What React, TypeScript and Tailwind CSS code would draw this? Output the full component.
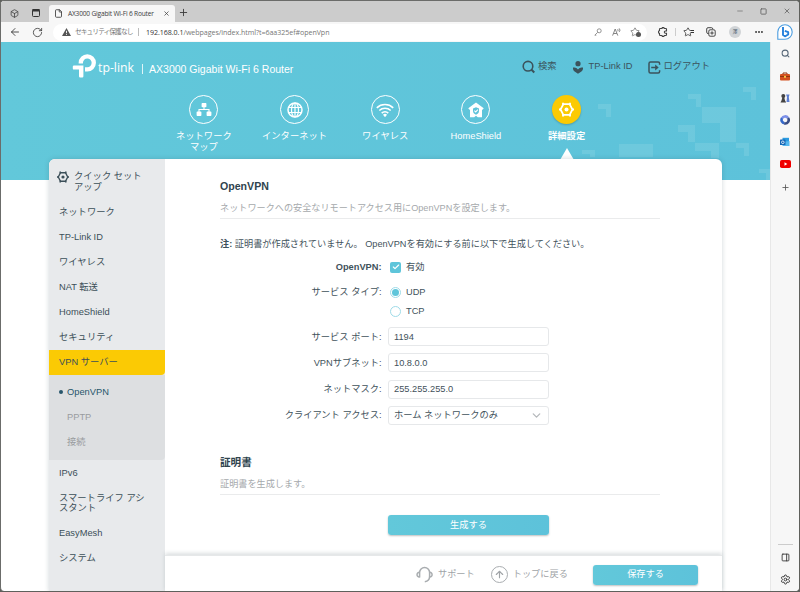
import type { ReactNode } from "react";
import clsx from "clsx";
import {
  ArrowLeft,
  ArrowUp,
  Box,
  Check,
  ChevronDown,
  File,
  Minus,
  MoreHorizontal,
  PanelRight,
  Plus,
  RotateCw,
  Search,
  Settings,
  Square,
  Star,
  X,
} from "lucide-react";

const MENU_TOP = ["ネットワーク", "TP-Link ID", "ワイヤレス", "NAT 転送", "HomeShield", "セキュリティ"];

function HexGear({ className }: { className?: string }) {
  return (
    <svg viewBox="0 0 24 24" className={className} fill="none" stroke="currentColor">
      <path d="M7 3.500h10L21.500 12 17 20.500H7L2.500 12z" strokeWidth="2.800" strokeLinejoin="round" />
      <path d="M6.500 1v4M17.500 1v4M0 12h3M21 12h3M6.500 19v4M17.500 19v4" strokeWidth="3.200" />
      <circle cx="12" cy="12" r="3.200" fill="currentColor" stroke="none" />
    </svg>
  );
}

function TpLogo() {
  return (
    <svg viewBox="0 0 24 24" className="h-6 w-6 shrink-0" fill="#fff">
      <path d="M8.800 9.600V8.800A6.500 6.500 0 1 1 15.300 15.300H13" fill="none" stroke="#fff" strokeWidth="4.300" />
      <path d="M2 11.400H11.400V22.200a1.200 1.200 0 0 1-1.200 1.200H8.200A1.200 1.200 0 0 1 7 22.200V15.600H2A1.200 1.200 0 0 1 .8 14.400V12.600A1.200 1.200 0 0 1 2 11.400z" />
    </svg>
  );
}

function NetworkMapIcon() {
  return (
    <svg viewBox="0 0 16 16" className="size-4" fill="#fff">
      <rect x="5.600" y="1" width="4.800" height="4.200" rx=".8" />
      <rect x=".6" y="9.600" width="4.800" height="4.400" rx=".8" />
      <rect x="10.600" y="9.600" width="4.800" height="4.400" rx=".8" />
      <path d="M8 5v2.500M3 10V7.500h10V10" fill="none" stroke="#fff" strokeWidth="1.100" />
    </svg>
  );
}

function GlobeIcon() {
  return (
    <svg viewBox="0 0 16 16" className="size-4" fill="none" stroke="#fff" strokeWidth="1.200">
      <circle cx="8" cy="8" r="7" strokeWidth="1.500" />
      <ellipse cx="8" cy="8" rx="3.500" ry="7" />
      <path d="M8 1v14M1.500 5.500h13M1.500 10.500h13" />
    </svg>
  );
}

function WifiIcon() {
  return (
    <svg viewBox="0 0 18 16" className="h-4 w-[18px]" fill="none" stroke="#fff" strokeWidth="1.600">
      <path d="M.8 5.800a12 12 0 0 1 16.400 0M3.300 8.500a8.300 8.300 0 0 1 11.400 0M5.700 11.200a4.800 4.800 0 0 1 6.600 0" />
      <path d="M7 12.800a2.800 2.800 0 0 1 4 0L9 15.200z" fill="#fff" stroke="none" />
    </svg>
  );
}

function ShieldHomeIcon() {
  return (
    <svg viewBox="0 0 16 16" className="size-4" fill="none">
      <path d="M8 .5 15.700 6.300 14.700 7.800 14 7.400V15.200H9.800L8 13.700 6.200 15.200H2V7.400l-.7.4L.3 6.300z" fill="#fff" />
      <path d="M8 5.300 11 6.400v2.500c0 1.700-1.200 3-3 3.800-1.800-.8-3-2.100-3-3.800V6.400z" fill="#5fc3da" />
      <path d="m6.400 8.700 1.300 1.300 2.200-2.300" stroke="#fff" strokeWidth="1.100" />
    </svg>
  );
}

function CloudUserIcon() {
  return (
    <svg viewBox="0 0 12 14" className="h-3.5 w-3" fill="#3b535c">
      <circle cx="6" cy="3.700" r="2.600" />
      <path d="M1 7.600c2.200-.5 3.800.2 5 1.900 1.200-1.700 2.800-2.400 5-1.900.2 1.800-.4 3-1.600 3.900L6 13.700l-3.400-2.200C1.400 10.600.8 9.400 1 7.600z" />
    </svg>
  );
}

function LogoutIcon() {
  return (
    <svg viewBox="0 0 13 13" className="size-[13px]" fill="none" stroke="#3b535c" strokeWidth="1.500">
      <path d="M11.600 3.800V2.500A1.500 1.500 0 0 0 10.100 1H2.500A1.500 1.500 0 0 0 1 2.500v8A1.500 1.500 0 0 0 2.500 12h7.600a1.500 1.500 0 0 0 1.500-1.500V9.200" />
      <path d="M3.200 6.500H9" />
      <path d="M7.200 3.500 10.700 6.500 7.200 9.500z" fill="#3b535c" stroke="none" />
    </svg>
  );
}

function HeadsetIcon() {
  return (
    <svg viewBox="0 0 17 17" className="size-[17px]" fill="none" stroke="#a9adb0" strokeWidth="1.500">
      <path d="M3.600 11.500V6.500a5 5 0 0 1 10 0v3.800c0 3.300-1.600 5.100-4.800 5.500" />
      <path d="M3.600 6.300C.2 6 .2 11.300 3.600 11M13.600 6.300c3.300-.3 3.300 5 0 4.700" />
    </svg>
  );
}

/* Pale pixel blocks behind the right part of the header */
function PixelPattern() {
  return (
    <svg viewBox="0 0 190 138" className="absolute top-0 right-0 h-[138px] w-[190px]" fill="#fff" fillOpacity=".1">
      <path d="M18 62h13v13h-5v-8h-8zM108 52h13v13h-5v-8h-8zM163 45h13v13h-5v-8h-8z" />
      <path d="M122 65h34v35h-16V81h-18zM98 83h17v17h-7v-10H98zM115 101h24v15h-8v-7h-16z" />
      <path d="M156 101h13v13h-5v-8h-8zM39 102h34v13H39zM2 108h13v7h-5v-3H2zM179 127h11v11h-4v-7h-7z" />
    </svg>
  );
}

function BrowserChrome() {
  return (
    <div className="font-['Open_Sans','Noto_Sans_CJK_JP',sans-serif] text-[#3c3c3c]">
      <div className="flex h-[21px] items-end bg-[#cccccc]">
        <div className="flex h-[18px] w-[48px] items-center gap-[13px] pl-[9px]">
          <Box className="size-[9px]" strokeWidth={2} />
          <svg viewBox="0 0 8 8" className="size-2">
            <rect x=".5" y=".5" width="7" height="7" rx="1" fill="none" stroke="#333" />
            <path d="M.5 0h7v2.500h-7z" fill="#333" />
          </svg>
        </div>
        <div className="flex h-[17px] w-[126px] items-center rounded-t-[3px] bg-[#f7f7f7] pl-[5px]">
          <File className="size-[9px] shrink-0" strokeWidth={2.300} />
          <span className="ml-[5px] w-[91px] text-[6.600px] tracking-[-0.190px] whitespace-nowrap">AX3000 Gigabit Wi-Fi 6 Router</span>
          <X className="ml-[4px] size-[7px] shrink-0" strokeWidth={2.500} />
        </div>
        <Plus className="mb-[4px] ml-[3px] size-[11px]" strokeWidth={2} />
        <div className="mb-[7px] ml-auto flex items-center gap-[16px] pr-[8px] text-[#666]">
          <Minus className="size-[8px]" />
          <Square className="size-[7px]" strokeWidth={3} />
          <X className="size-[8px]" strokeWidth={2.500} />
        </div>
      </div>
      <div className="flex h-5 items-center bg-[#f7f7f7]">
        <ArrowLeft className="ml-[8px] size-[12px]" strokeWidth={1.800} />
        <RotateCw className="ml-[11px] size-[11px]" strokeWidth={1.800} />
        <div className="ml-[10px] flex h-[17px] w-[594px] items-center rounded-full bg-white pl-[9px] text-[7.100px] whitespace-nowrap text-[#777]">
          <svg viewBox="0 0 9 8" className="h-2 w-[9px] shrink-0">
            <path d="M4.500 0 9 8H0z" fill="#555" />
            <path d="M4.500 2.800v2.400M4.500 6v.9" stroke="#fff" strokeWidth=".9" />
          </svg>
          <span className="ml-[4px] w-[58px] text-[6.700px] tracking-[-0.900px]">セキュリティ保護なし</span>
          <span className="ml-[5px] h-[8px] w-px bg-[#bbb]" />
          <span className="ml-[7px] tracking-[-0.060px]">
            <span className="text-[#333]">192.168.0.1</span>/webpages/index.html?t=6aa325ef#openVpn
          </span>
          <div className="mr-[7px] ml-auto flex items-center gap-[9px]">
            <svg viewBox="0 0 8 8" className="mr-px size-2" fill="none" stroke="#888" strokeWidth=".9">
              <circle cx="5.200" cy="2.800" r="2" />
              <path d="M3.700 4.300.8 7.200h1.500" />
            </svg>
            <svg viewBox="0 0 9 8" className="h-2 w-[9px]" fill="none" stroke="#777" strokeWidth=".9">
              <path d="M.6 7.600 3.200 1l2.600 6.600M1.500 5.500h3.400M5.700 1.200q.9.900 0 2M7.200.4q1.600 1.700 0 3.500" />
            </svg>
            <span className="relative">
              <Star className="size-[10px]" strokeWidth={1.900} />
              <span className="absolute right-[-1px] bottom-0 size-[5px] rounded-full bg-[#555]" />
            </span>
          </div>
        </div>
        <svg viewBox="0 0 10 10" className="ml-[11px] size-[10px]" fill="none" stroke="#444" strokeWidth="1.100">
          <path d="M8.500 4V2.200a.7.700 0 0 0-.7-.7H6.200a1.100 1.100 0 0 0-2.200 0H2.200a.7.700 0 0 0-.7.700v1.600a1.200 1.200 0 0 0 0 2.400v1.600c0 .4.300.7.700.7H4a1.100 1.100 0 0 0 2.200 0h1.600c.4 0 .7-.3.700-.7V6.200H7.400a1.100 1.100 0 0 1 0-2.200z" />
        </svg>
        <span className="ml-[7px] h-[8px] w-px bg-[#ccc]" />
        <span className="relative ml-[7px]">
          <Star className="size-[10px]" strokeWidth={2} />
          <span className="absolute top-[3px] right-[-1px] h-[3px] w-[3px] border-y border-[#333] bg-[#f7f7f7]" />
        </span>
        <svg viewBox="0 0 10 10" className="ml-[13px] size-[10px]" fill="none" stroke="#333" strokeWidth=".9">
          <path d="M2.500 6.500H2a1.300 1.300 0 0 1-1.300-1.300V2A1.300 1.300 0 0 1 2 .7h3.500A1.300 1.300 0 0 1 6.800 2" />
          <rect x="2.800" y="2.800" width="6.400" height="6.400" rx="1.300" />
          <path d="M6 4.300v3.400M4.300 6h3.400" />
        </svg>
        <span className="ml-[13px] flex size-3 items-center justify-center rounded-full bg-[#d0d3d6] text-[5px] text-[#456]">澤</span>
        <MoreHorizontal className="ml-[13px] size-[10px]" strokeWidth={3} />
      </div>
    </div>
  );
}

function EdgeSidebar() {
  return (
    <aside className="flex w-[29px] shrink-0 flex-col items-center border-l border-[#e8e8e8] bg-[#f7f7f7] text-[#555]">
      <Search className="mt-[7px] size-[9px] text-[#567]" strokeWidth={2.800} />
      <svg viewBox="0 0 10 9" className="mt-[14px] h-[9px] w-[10px]">
        <path d="M3 2.500V1h4v1.500" fill="none" stroke="#8d3510" />
        <rect x="0" y="2" width="10" height="6.500" rx="1" fill="#d3501e" />
        <path d="M0 4.500h10" stroke="#8d3510" />
        <rect x="4" y="3.800" width="2" height="2" fill="#f6c445" />
      </svg>
      <svg viewBox="0 0 10 10" className="mt-[12px] size-[10px]">
        <path d="M6.500 9 7 4 6 1.500h3.500L8.800 4l.7 5z" fill="#5d7ed0" />
        <circle cx="3.300" cy="3" r="2" fill="#444" />
        <path d="M2.500 4h1.700L5 7.500l1.200 2H.5l1-2z" fill="#444" />
      </svg>
      <svg viewBox="0 0 10 10" className="mt-[12px] size-[10px]" fill="none" strokeWidth="2.600">
        <path d="M8 3A3.400 3.400 0 0 0 2 3.500" stroke="#7b8fe8" />
        <path d="M2 3.200A3.400 3.400 0 0 0 4.500 8.300" stroke="#3568c9" />
        <path d="M4.300 8.300A3.400 3.400 0 0 0 8 3" stroke="#3a4e86" />
      </svg>
      <svg viewBox="0 0 10 10" className="mt-[12px] size-[10px]">
        <rect x="2.500" y=".8" width="6.500" height="6" fill="#2b9be0" />
        <path d="M2.500 5 9.500 4v5h-7z" fill="#55b8ef" />
        <rect x="0" y="2.600" width="5.500" height="5.500" rx=".6" fill="#1467b8" />
        <circle cx="2.800" cy="5.300" r="1.300" fill="none" stroke="#fff" strokeWidth=".8" />
      </svg>
      <svg viewBox="0 0 11 8" className="mt-[13px] h-2 w-[11px]">
        <rect width="11" height="8" rx="1.800" fill="#f00000" />
        <path d="M4.500 2.300 7.300 4 4.500 5.700z" fill="#fff" />
      </svg>
      <Plus className="mt-[15px] size-[9px]" strokeWidth={2.200} />
      <span className="mt-auto h-px w-[15px] bg-[#ccc]" />
      <PanelRight className="mt-[8px] size-[9px] text-[#333]" strokeWidth={2.300} />
      <Settings className="mt-[12px] mb-[6px] size-[11px] text-[#333]" strokeWidth={2} />
    </aside>
  );
}

function NavItem({ label, active, children }: { label: ReactNode; active?: boolean; children: ReactNode }) {
  return (
    <div className="relative flex w-[90.700px] flex-col items-center">
      <span
        className={clsx(
          "flex size-[29px] items-center justify-center rounded-full",
          active ? "bg-[#fbca04] shadow-[0_1px_2px_rgba(0,0,0,0.2)]" : "border-[1.500px] border-white"
        )}
      >
        {children}
      </span>
      <span className={clsx("mt-[7px] text-center text-[9.300px] leading-[10.500px] whitespace-nowrap", active && "font-bold")}>
        {label}
      </span>
    </div>
  );
}

function RouterHeader() {
  return (
    <header className="relative h-[138px] bg-linear-to-r from-[#62c8da] to-[#5dc2da] text-white">
      <PixelPattern />
      <div className="flex h-[53px] items-start pl-[71px]">
        <div className="mt-[12px] flex items-start">
          <TpLogo />
          <span className="mt-[2px] ml-[2px] w-[38px] font-['Open_Sans',sans-serif] text-[12.300px] leading-[24px] font-medium whitespace-nowrap">
            tp-link
          </span>
        </div>
        <span className="mt-[22px] ml-[6px] h-[10px] w-px bg-white/80" />
        <h1 className="mt-[19px] ml-[6px] text-[10.530px] leading-4 whitespace-nowrap">AX3000 Gigabit Wi-Fi 6 Router</h1>
        <div className="mt-[17px] mr-[60px] ml-auto flex h-4 items-center text-[9.300px] whitespace-nowrap text-[#3b535c]">
          <svg viewBox="0 0 14 14" className="size-[14px]" fill="none" stroke="currentColor" strokeWidth="1.600">
            <circle cx="6" cy="6.200" r="4.800" />
            <path d="m9.300 9.500 3 3" strokeWidth="2" />
          </svg>
          <span className="ml-[2px]">検索</span>
          <span className="w-[15px]" />
          <CloudUserIcon />
          <span className="ml-[5px]">TP-Link ID</span>
          <span className="w-[15px]" />
          <LogoutIcon />
          <span className="ml-[3px]">ログアウト</span>
        </div>
      </div>
      <nav className="flex pl-[157.500px]">
        <NavItem label={<>ネットワーク<br />マップ</>}>
          <NetworkMapIcon />
        </NavItem>
        <NavItem label="インターネット">
          <GlobeIcon />
        </NavItem>
        <NavItem label="ワイヤレス">
          <WifiIcon />
        </NavItem>
        <NavItem label="HomeShield">
          <ShieldHomeIcon />
        </NavItem>
        <NavItem label="詳細設定" active>
          <HexGear className="size-[15px]" />
          <span className="absolute top-[53px] size-0 border-x-[7px] border-b-[12px] border-x-transparent border-b-white" />
        </NavItem>
      </nav>
    </header>
  );
}

function MenuRow({ children, className }: { children: ReactNode; className?: string }) {
  return <li className={clsx("flex h-[25.060px] items-center pl-[10px] whitespace-nowrap", className)}>{children}</li>;
}

function SideMenu() {
  return (
    <ul className="w-[116px] shrink-0 overflow-hidden rounded-tl-[6px] bg-[#e8eaec] pt-[5px] text-[9.300px] leading-[10.500px] text-[#3b4f58]">
      <li className="flex h-[35.500px] items-start pt-[7px] pl-[8px]">
        <HexGear className="size-3" />
        <span className="ml-[5px]">
          クイック セット
          <br />
          アップ
        </span>
      </li>
      {MENU_TOP.map((item) => (
        <MenuRow key={item}>{item}</MenuRow>
      ))}
      <MenuRow className="rounded-br-[4px] bg-[#fbca04]">VPN サーバー</MenuRow>
      <li className="mb-[0.500px] rounded-br-[4px] bg-[#dddfe1] py-[5px]">
        <ul>
          <MenuRow className="text-[#27566b]">
            <span className="mr-[4px] size-1 rounded-full bg-[#27566b]" />
            OpenVPN
          </MenuRow>
          <MenuRow className="pl-[18px] text-[#999c9f]">PPTP</MenuRow>
          <MenuRow className="pl-[18px] text-[#999c9f]">接続</MenuRow>
        </ul>
      </li>
      <MenuRow>IPv6</MenuRow>
      <li className="flex h-[35.300px] items-center pl-[10px]">
        <span>
          スマートライフ アシ
          <br />
          スタント
        </span>
      </li>
      <MenuRow>EasyMesh</MenuRow>
      <MenuRow>システム</MenuRow>
    </ul>
  );
}

function Field({ label, children }: { label: ReactNode; children: ReactNode }) {
  return (
    <div className="mb-[7.300px] flex h-[19px] items-center">
      <span className="w-[161.500px] text-right">{label}</span>
      <div className="ml-[6.500px] flex h-[19px] w-[161px] items-center justify-between rounded-[3px] border border-[#e6e8ea] px-[5px]">
        {children}
      </div>
    </div>
  );
}

function OpenVpnPage() {
  return (
    <section className="h-[396px] pt-[19px] pr-[62px] pl-[55px] text-[9.250px] leading-[16px] whitespace-nowrap text-[#3f525b]">
      <h2 className="text-[10.600px] font-bold text-[#2f444e]">OpenVPN</h2>
      <p className="mt-[6px] h-[19px] border-b border-[#eaebec] text-[9.130px] text-[#a5a9ac]">
        ネットワークへの安全なリモートアクセス用にOpenVPNを設定します。
      </p>
      <p className="mt-[17px] text-[9.180px]">
        <b>注:</b> 証明書が作成されていません。 OpenVPNを有効にする前に以下で生成してください。
      </p>
      <div className="mt-[7px] flex h-4 items-center">
        <span className="w-[161.500px] text-right font-bold">OpenVPN:</span>
        <span className="ml-[8.500px] flex size-[11px] items-center justify-center rounded-[2px] bg-[#5ec5da]">
          <Check className="size-2 text-white" strokeWidth={3.500} />
        </span>
        <span className="ml-[5px]">有効</span>
      </div>
      <div className="mt-[9px] flex h-4 items-center">
        <span className="w-[161.500px] text-right">サービス タイプ:</span>
        <span className="ml-[8.500px] flex size-[11px] items-center justify-center rounded-full border border-[#9edbe8]">
          <span className="size-[7px] rounded-full bg-[#5ec5da]" />
        </span>
        <span className="ml-[5px]">UDP</span>
      </div>
      <div className="mt-[3px] mb-[8px] flex h-4 items-center pl-[170px]">
        <span className="size-[11px] rounded-full border border-[#9edbe8]" />
        <span className="ml-[5px]">TCP</span>
      </div>
      <Field label="サービス ポート:">1194</Field>
      <Field label="VPNサブネット:">10.8.0.0</Field>
      <Field label="ネットマスク:">255.255.255.0</Field>
      <Field label="クライアント アクセス:">
        ホーム ネットワークのみ
        <ChevronDown className="size-[13px] text-[#b5b8bb]" strokeWidth={2.400} />
      </Field>
      <h2 className="mt-[29.300px] text-[10.600px] font-bold text-[#2f444e]">証明書</h2>
      <p className="mt-[6px] h-[19px] border-b border-[#eaebec] text-[9.130px] text-[#a5a9ac]">証明書を生成します。</p>
      <button className="mt-[19.500px] ml-[168px] flex h-5 w-[161px] items-center justify-center rounded-[3px] bg-linear-to-r from-[#62c8da] to-[#5dc2da] text-white shadow-[0_1px_2px_rgba(0,0,0,0.25)]">
        生成する
      </button>
    </section>
  );
}

export default function App() {
  return (
    <div className="h-[592px] w-[800px] overflow-hidden bg-[#5f605c]">
      <div className="relative flex h-[591px] w-[799px] flex-col overflow-hidden rounded-[4px] border-t border-l border-[#6b6c6a] bg-white font-['Liberation_Sans','Noto_Sans_CJK_JP',sans-serif]">
        <BrowserChrome />
        <svg viewBox="0 0 16 16" className="absolute top-[23px] right-[6px] size-4" fill="none">
          <path d="M.8 15V8A7.200 7.200 0 1 1 8 15.200H.8z" fill="#fff" stroke="#4b9de0" strokeWidth="1.100" />
          <path d="M6 3v8l2.300 1.300L11.200 10.500V8.200L7.800 6.800" stroke="#2480dc" strokeWidth="1.900" strokeLinejoin="round" />
        </svg>
        <div className="flex min-h-0 flex-1">
          <div className="min-w-0 flex-1 overflow-hidden">
            <RouterHeader />
            <main className="relative mx-auto -mt-[21px] flex h-[433px] w-[673px] rounded-t-[6px] bg-white shadow-[0_0_5px_rgba(40,70,80,0.22)]">
              <SideMenu />
              <div className="flex min-w-0 flex-1 flex-col">
                <OpenVpnPage />
                <footer className="flex flex-1 items-center border-t border-[#e6e8e9] pt-px pr-6 text-[9.200px] whitespace-nowrap text-[#a0a4a7] shadow-[0_-2px_4px_rgba(40,60,70,0.16)]">
                  <span className="w-[251px]" />
                  <HeadsetIcon />
                  <span className="ml-[5px]">サポート</span>
                  <span className="ml-[16px] flex size-[17px] items-center justify-center rounded-full border-[1.500px] border-[#a9adb0]">
                    <ArrowUp className="size-[11px]" strokeWidth={2.500} />
                  </span>
                  <span className="ml-[5px]">トップに戻る</span>
                  <button className="ml-auto flex h-5 w-[105px] items-center justify-center rounded-[3px] bg-linear-to-r from-[#62c8da] to-[#5dc2da] text-white shadow-[0_1px_2px_rgba(0,0,0,0.25)]">
                    保存する
                  </button>
                </footer>
              </div>
            </main>
          </div>
          <EdgeSidebar />
        </div>
      </div>
    </div>
  );
}
